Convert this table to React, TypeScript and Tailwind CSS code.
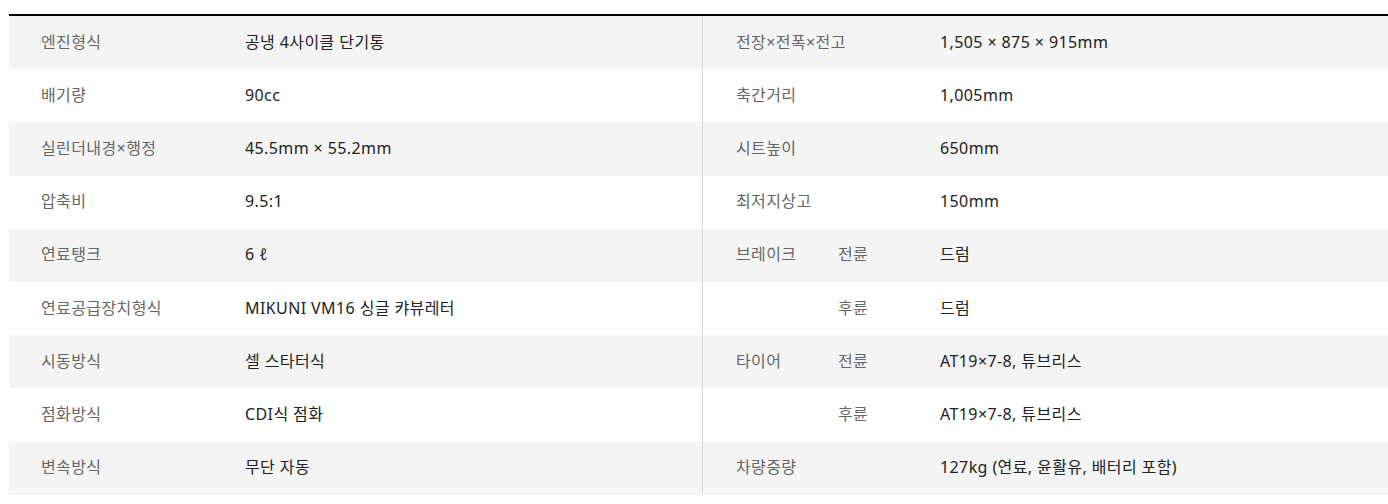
import React from "react";

type R = { l: string; v: string; rl: string; rs?: string; rv: string };

const rows: R[] = [
  { l: "엔진형식", v: "공냉 4사이클 단기통", rl: "전장×전폭×전고", rv: "1,505 × 875 × 915mm" },
  { l: "배기량", v: "90cc", rl: "축간거리", rv: "1,005mm" },
  { l: "실린더내경×행정", v: "45.5mm × 55.2mm", rl: "시트높이", rv: "650mm" },
  { l: "압축비", v: "9.5:1", rl: "최저지상고", rv: "150mm" },
  { l: "연료탱크", v: "6 ℓ", rl: "브레이크", rs: "전륜", rv: "드럼" },
  { l: "연료공급장치형식", v: "MIKUNI VM16 싱글 캬뷰레터", rl: "", rs: "후륜", rv: "드럼" },
  { l: "시동방식", v: "셀 스타터식", rl: "타이어", rs: "전륜", rv: "AT19×7-8, 튜브리스" },
  { l: "점화방식", v: "CDI식 점화", rl: "", rs: "후륜", rv: "AT19×7-8, 튜브리스" },
  { l: "변속방식", v: "무단 자동", rl: "차량중량", rv: "127kg (연료, 윤활유, 배터리 포함)" },
];

export default function App() {
  return (
    <div
      className="w-[1388px] h-[504px] bg-white pt-[14px] pl-[9px]"
      style={{ fontFamily: '"Noto Sans", "Noto Sans CJK KR", sans-serif' }}
    >
      <div className="border-t-2 border-black text-[16px] leading-none tracking-[0.4px]">
        {rows.map((r, i) => (
          <div
            key={i}
            className={`flex h-[53.2px] items-center ${i % 2 === 0 ? "bg-[#f4f4f4]" : "bg-white"}`}
          >
            <div className="flex w-[693px] h-full items-center pb-[2px]">
              <div className="w-[236px] pl-[32px] text-[#666666]">{r.l}</div>
              <div className="text-[#222222]">{r.v}</div>
            </div>
            <div className="flex flex-1 h-full items-center border-l border-[#d9d9d9] pb-[2px]">
              {r.rs !== undefined ? (
                <>
                  <div className="w-[135px] pl-[33px] text-[#666666]">{r.rl}</div>
                  <div className="w-[102px] text-[#666666]">{r.rs}</div>
                </>
              ) : (
                <div className="w-[237px] pl-[33px] text-[#666666]">{r.rl}</div>
              )}
              <div className="text-[#222222]">{r.rv}</div>
            </div>
          </div>
        ))}
      </div>
    </div>
  );
}
